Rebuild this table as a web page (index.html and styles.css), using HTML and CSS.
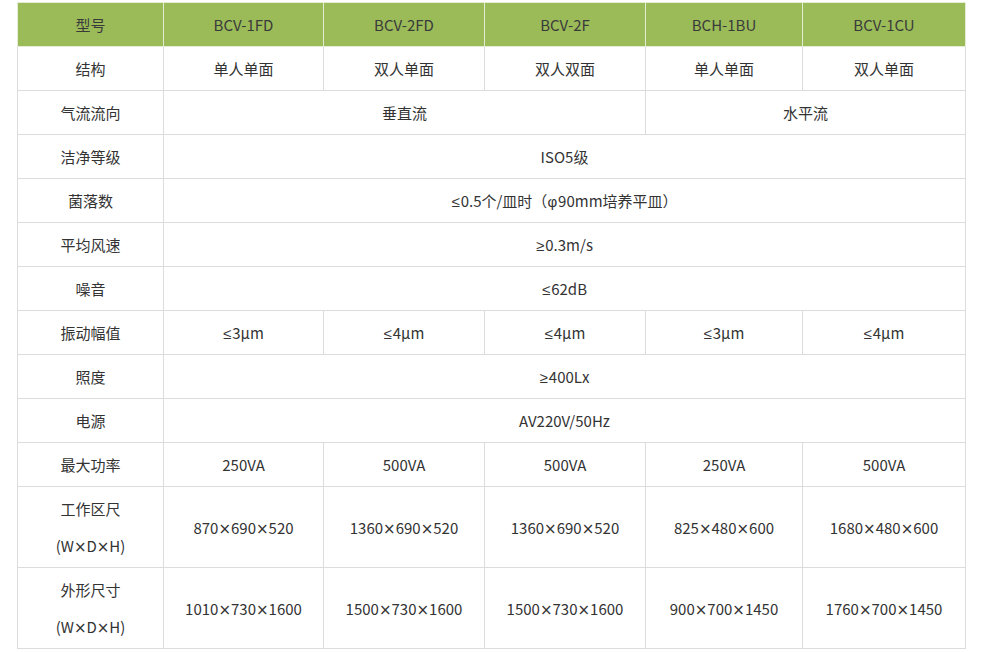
FILE: index.html
```html
<!DOCTYPE html>
<html lang="zh">
<head>
<meta charset="utf-8">
<link rel="stylesheet" href="styles.css">
</head>
<body>
<table class="spec">
  <colgroup>
    <col class="c0"><col class="c1"><col class="c2"><col class="c3"><col class="c4"><col class="c5">
  </colgroup>
  <thead>
    <tr class="head">
      <th>型号</th><th>BCV-1FD</th><th>BCV-2FD</th><th>BCV-2F</th><th>BCH-1BU</th><th>BCV-1CU</th>
    </tr>
  </thead>
  <tbody>
    <tr><td>结构</td><td>单人单面</td><td>双人单面</td><td>双人双面</td><td>单人单面</td><td>双人单面</td></tr>
    <tr><td>气流流向</td><td colspan="3">垂直流</td><td colspan="2">水平流</td></tr>
    <tr><td>洁净等级</td><td colspan="5">ISO5级</td></tr>
    <tr><td>菌落数</td><td colspan="5"><span class="le">≤</span>0.5个/皿时（<span class="le">φ</span>90mm培养平皿）</td></tr>
    <tr><td>平均风速</td><td colspan="5"><span class="le">≥</span>0.3m/s</td></tr>
    <tr><td>噪音</td><td colspan="5"><span class="le">≤</span>62dB</td></tr>
    <tr><td>振动幅值</td><td><span class="le">≤</span>3μm</td><td><span class="le">≤</span>4μm</td><td><span class="le">≤</span>4μm</td><td><span class="le">≤</span>3μm</td><td><span class="le">≤</span>4μm</td></tr>
    <tr><td>照度</td><td colspan="5"><span class="le">≥</span>400Lx</td></tr>
    <tr><td>电源</td><td colspan="5">AV220V/50Hz</td></tr>
    <tr><td>最大功率</td><td>250VA</td><td>500VA</td><td>500VA</td><td>250VA</td><td>500VA</td></tr>
    <tr><td>工作区尺<br>(W<span class="x">×</span>D<span class="x">×</span>H)</td><td>870<span class="x">×</span>690<span class="x">×</span>520</td><td>1360<span class="x">×</span>690<span class="x">×</span>520</td><td>1360<span class="x">×</span>690<span class="x">×</span>520</td><td>825<span class="x">×</span>480<span class="x">×</span>600</td><td>1680<span class="x">×</span>480<span class="x">×</span>600</td></tr>
    <tr><td>外形尺寸<br>(W<span class="x">×</span>D<span class="x">×</span>H)</td><td>1010<span class="x">×</span>730<span class="x">×</span>1600</td><td>1500<span class="x">×</span>730<span class="x">×</span>1600</td><td>1500<span class="x">×</span>730<span class="x">×</span>1600</td><td>900<span class="x">×</span>700<span class="x">×</span>1450</td><td>1760<span class="x">×</span>700<span class="x">×</span>1450</td></tr>
  </tbody>
</table>
</body>
</html>
```

FILE: styles.css
```css
html, body {
  margin: 0;
  padding: 0;
  background: #fff;
}
body {
  padding: 2px 0 0 17px;
  font-family: "Noto Sans CJK SC", "Noto Sans", sans-serif;
  font-size: 15px;
  color: #333;
}
.spec {
  border-collapse: collapse;
  table-layout: fixed;
  width: 948px;
}
.c0 { width: 146px; }
.c1 { width: 160px; }
.c2 { width: 161px; }
.c3 { width: 161px; }
.c4 { width: 157px; }
.c5 { width: 163px; }
.spec th,
.spec td {
  border: 1px solid #dcdcdc;
  text-align: center;
  vertical-align: middle;
  padding: 3px 0;
  line-height: 37px;
  font-weight: normal;
}
.head th {
  background: #9bbb59;
  border-color: #e4ecd6;
  color: #3a3a3a;
}
.le {
  font-family: "Liberation Sans", sans-serif;
  line-height: 1;
  padding-right: 1px;
}
.x {
  font-family: "DejaVu Sans", sans-serif;
  line-height: 1;
}
```
